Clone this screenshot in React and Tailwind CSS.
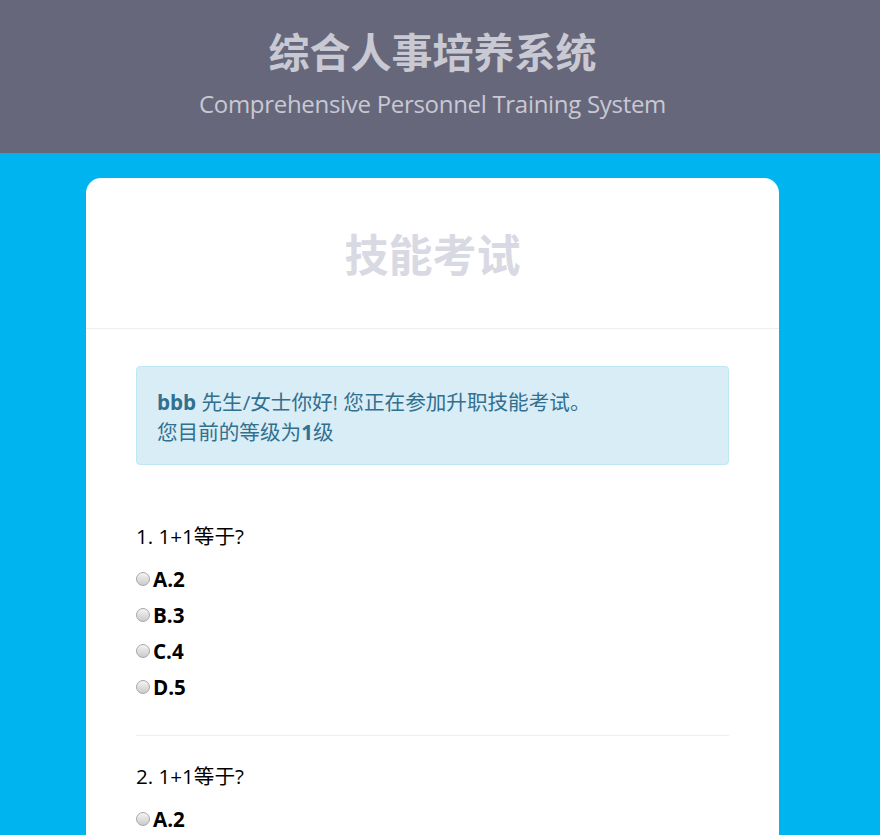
import React from 'react';

const questions = [
    { no: 1, text: '1+1等于?', options: ['A.2', 'B.3', 'C.4', 'D.5'] },
    { no: 2, text: '1+1等于?', options: ['A.2', 'B.3', 'C.4', 'D.5'] },
];

const Radio = () => (
    <span className="inline-block w-[14px] h-[14px] rounded-full border border-[#a8a8a8] bg-linear-to-b from-[#f4f4f4] to-[#cbcbcb] shrink-0" />
);

const App = () => {
    return (
        <div className="min-h-[835px] bg-[#00b4ef] font-['Open_Sans','Noto_Sans_CJK_SC',sans-serif]">
            <div className="h-[153px] bg-[#67677c] flex flex-col items-center pt-[23px] pr-[15px]">
                <h1 className="text-[41px] leading-[54px] font-bold text-[#c9c9d3] font-['Noto_Sans_CJK_SC',sans-serif]">
                    综合人事培养系统
                </h1>
                <p className="mt-[10px] text-[24px] leading-[34px] font-normal text-[#c9c9d3] tracking-[-0.3px]">
                    Comprehensive Personnel Training System
                </p>
            </div>

            <div className="pt-[25px]">
                <div className="ml-[86px] w-[693px] bg-white rounded-t-[15px] min-h-[700px]">
                    <div className="h-[151px] flex items-center justify-center border-b border-[#eeeeee]">
                        <h2 className="text-[44px] font-bold text-[#d9d9e4] font-['Noto_Sans_CJK_SC',sans-serif]">技能考试</h2>
                    </div>

                    <div className="px-[50px] pt-[37px]">
                        <div className="bg-[#d9edf7] border border-[#bce8f1] rounded-[4px] px-[20px] pt-[20px] pb-[17px] text-[#31708f] text-[20.6px] leading-[30px]">
                            <p><b>bbb</b> 先生/女士你好! 您正在参加升职技能考试。</p>
                            <p>您目前的等级为<b>1</b>级</p>
                        </div>

                        <div className="mt-[31px]">
                            {questions.map((q) => (
                                <div key={q.no} className="pt-[25px] pb-[30px] border-b border-[#eeeeee]">
                                    <p className="text-[20.6px] leading-[30px] text-black mb-[10px]">{q.no}. {q.text}</p>
                                    {q.options.map((o) => (
                                        <label key={o} className="flex items-center h-[36px] gap-[3px] text-[20.6px] font-bold text-black">
                                            <Radio />
                                            {o}
                                        </label>
                                    ))}
                                </div>
                            ))}
                        </div>
                    </div>
                </div>
            </div>
        </div>
    );
};

export default App;
